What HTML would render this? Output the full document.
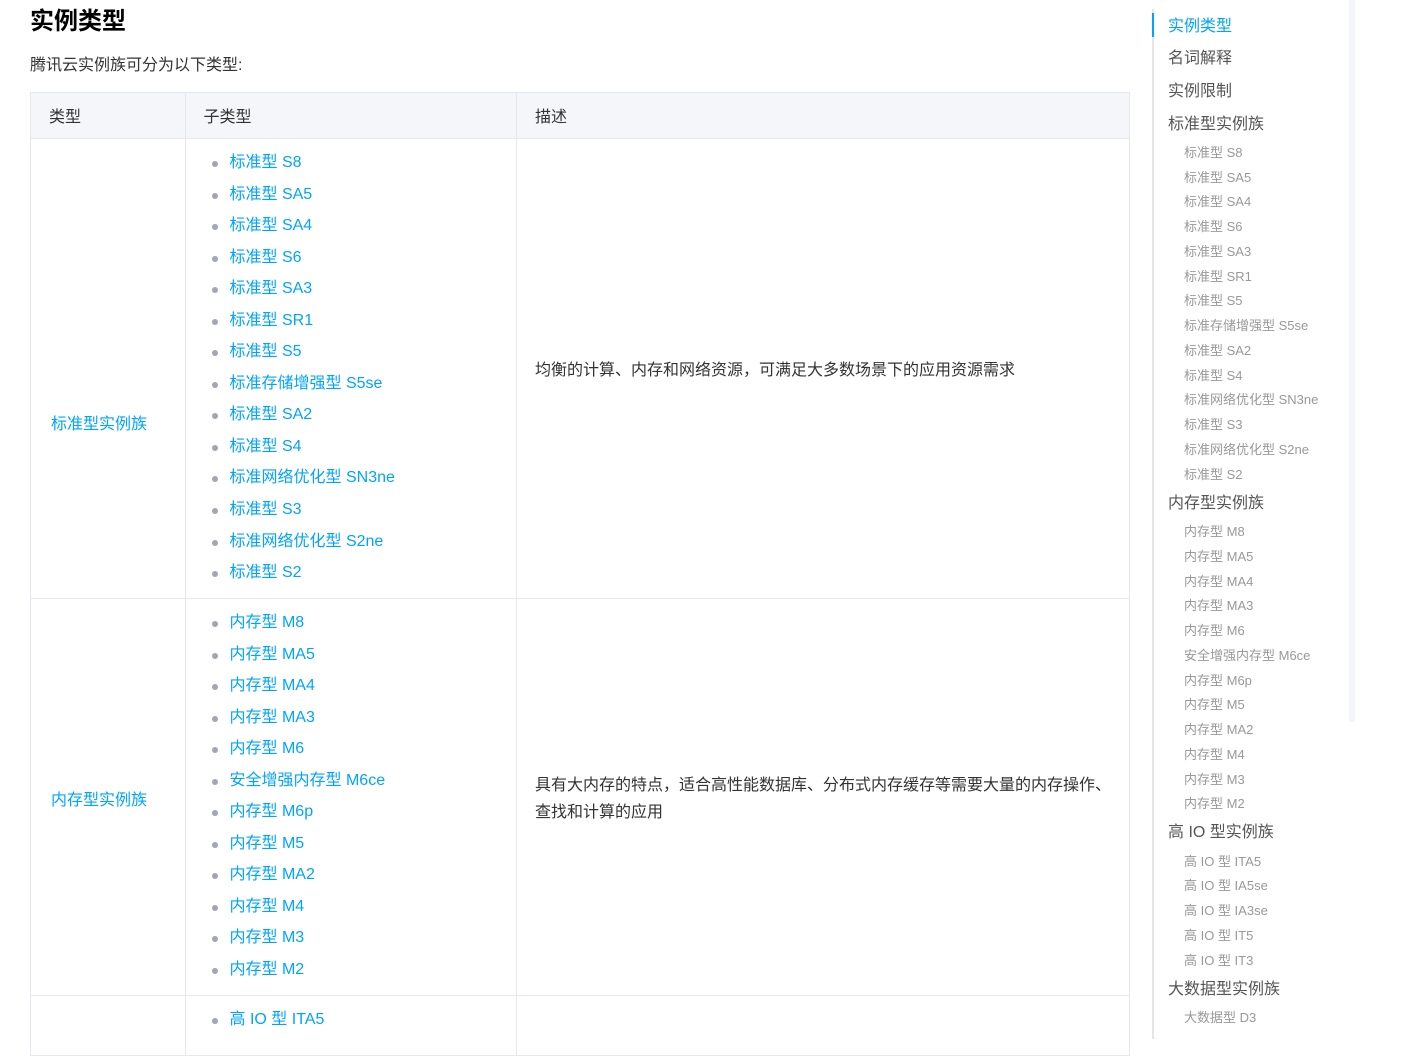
<!DOCTYPE html>
<html><head><meta charset="utf-8"><style>
*{margin:0;padding:0;box-sizing:border-box}
body{width:1409px;height:1036px;overflow:hidden;background:#fff;font-family:"Liberation Sans","Noto Sans CJK SC",sans-serif;color:#333;position:relative}
.a{position:absolute;white-space:nowrap}
h1{position:absolute;left:30px;top:6px;font-size:24px;font-weight:bold;color:#000;line-height:32px}
.intro{left:30px;top:55px;font-size:16px;line-height:22px;color:#333}
table{position:absolute;left:30px;top:92px;width:1100px;border-collapse:collapse;font-size:16px}
td,th{border:1px solid #e5e8ef;vertical-align:middle;text-align:left;font-weight:normal;padding:0 18px}
th{background:#f5f6fa;height:46px;color:#333;padding-bottom:2px}
.blue{color:#00a4ff}
ul{list-style:none}
ul.s li{height:31.55px;line-height:31.55px;color:#00a4ff;position:relative;padding-left:34px;white-space:nowrap}
ul.s li:before{content:"";position:absolute;left:16px;top:14px;width:6px;height:6px;border-radius:50%;background:#a1a6b3}
.side{position:absolute;left:1152px;top:1px;width:200px}
.t{position:absolute;left:16px;font-size:16px;color:#555;line-height:20px;white-space:nowrap}
.sb{position:absolute;left:32px;font-size:13px;color:#999;line-height:18px;white-space:nowrap}
</style></head><body>
<h1>实例类型</h1>
<div class="a intro">腾讯云实例族可分为以下类型:</div>
<table>
<tr><th style="width:156px">类型</th><th style="width:333px">子类型</th><th>描述</th></tr>
<tr style="height:460px"><td class="blue" style="vertical-align:top;padding-top:271px;padding-left:20px">标准型实例族</td><td style="vertical-align:top;padding-top:8px;padding-left:10px"><ul class="s">
<li>标准型 S8</li><li>标准型 SA5</li><li>标准型 SA4</li><li>标准型 S6</li><li>标准型 SA3</li><li>标准型 SR1</li><li>标准型 S5</li><li>标准存储增强型 S5se</li><li>标准型 SA2</li><li>标准型 S4</li><li>标准网络优化型 SN3ne</li><li>标准型 S3</li><li>标准网络优化型 S2ne</li><li>标准型 S2</li></ul></td>
<td style="padding-bottom:2px">均衡的计算、内存和网络资源，可满足大多数场景下的应用资源需求</td></tr>
<tr style="height:397px"><td class="blue" style="vertical-align:top;padding-top:187px;padding-left:20px">内存型实例族</td><td style="vertical-align:top;padding-top:8px;padding-left:10px"><ul class="s">
<li>内存型 M8</li><li>内存型 MA5</li><li>内存型 MA4</li><li>内存型 MA3</li><li>内存型 M6</li><li>安全增强内存型 M6ce</li><li>内存型 M6p</li><li>内存型 M5</li><li>内存型 MA2</li><li>内存型 M4</li><li>内存型 M3</li><li>内存型 M2</li></ul></td>
<td style="line-height:27px;padding-top:4px;white-space:nowrap">具有大内存的特点，适合高性能数据库、分布式内存缓存等需要大量的内存操作、<br>查找和计算的应用</td></tr>
<tr style="height:60px"><td></td><td style="vertical-align:top;padding-top:8px;padding-left:10px"><ul class="s"><li>高 IO 型 ITA5</li></ul></td><td></td></tr>
</table>
<div style="position:absolute;left:1349px;top:0;width:6px;height:722px;background:#f3f4f7"></div>
<div class="side">
<div style="position:absolute;left:0;top:8px;width:2px;height:1030px;background:#e5e5e5"></div>
<div style="position:absolute;left:0;top:12px;width:2px;height:24px;background:#00a4ff"></div>
<div class="t" style="top:16px;color:#00a4ff">实例类型</div>
<div class="t" style="top:48px">名词解释</div>
<div class="t" style="top:81px">实例限制</div>
<div class="t" style="top:114px">标准型实例族</div>
<div class="sb" style="top:143px">标准型 S8</div>
<div class="sb" style="top:168px">标准型 SA5</div>
<div class="sb" style="top:192px">标准型 SA4</div>
<div class="sb" style="top:217px">标准型 S6</div>
<div class="sb" style="top:242px">标准型 SA3</div>
<div class="sb" style="top:267px">标准型 SR1</div>
<div class="sb" style="top:291px">标准型 S5</div>
<div class="sb" style="top:316px">标准存储增强型 S5se</div>
<div class="sb" style="top:341px">标准型 SA2</div>
<div class="sb" style="top:366px">标准型 S4</div>
<div class="sb" style="top:390px">标准网络优化型 SN3ne</div>
<div class="sb" style="top:415px">标准型 S3</div>
<div class="sb" style="top:440px">标准网络优化型 S2ne</div>
<div class="sb" style="top:465px">标准型 S2</div>
<div class="t" style="top:493px">内存型实例族</div>
<div class="sb" style="top:522px">内存型 M8</div>
<div class="sb" style="top:547px">内存型 MA5</div>
<div class="sb" style="top:572px">内存型 MA4</div>
<div class="sb" style="top:596px">内存型 MA3</div>
<div class="sb" style="top:621px">内存型 M6</div>
<div class="sb" style="top:646px">安全增强内存型 M6ce</div>
<div class="sb" style="top:671px">内存型 M6p</div>
<div class="sb" style="top:695px">内存型 M5</div>
<div class="sb" style="top:720px">内存型 MA2</div>
<div class="sb" style="top:745px">内存型 M4</div>
<div class="sb" style="top:770px">内存型 M3</div>
<div class="sb" style="top:794px">内存型 M2</div>
<div class="t" style="top:822px">高 IO 型实例族</div>
<div class="sb" style="top:852px">高 IO 型 ITA5</div>
<div class="sb" style="top:876px">高 IO 型 IA5se</div>
<div class="sb" style="top:901px">高 IO 型 IA3se</div>
<div class="sb" style="top:926px">高 IO 型 IT5</div>
<div class="sb" style="top:951px">高 IO 型 IT3</div>
<div class="t" style="top:979px">大数据型实例族</div>
<div class="sb" style="top:1008px">大数据型 D3</div>
</div>
</body></html>
